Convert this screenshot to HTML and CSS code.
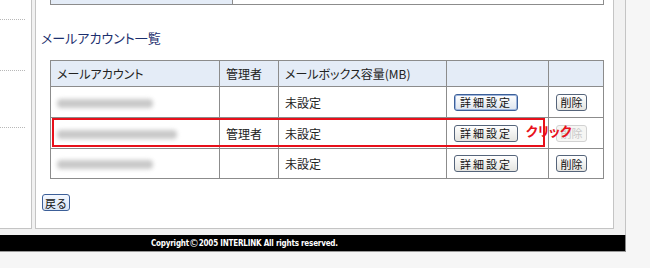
FILE: index.html
```html
<!DOCTYPE html>
<html lang="ja">
<head>
    <meta charset="UTF-8">
    <title>メールアカウント一覧</title>
    <link rel="stylesheet" href="styles.css">
</head>
<body>

<div class="page">
    <div class="columns">
        <div class="sidebar">
            <div class="dots d1"></div>
            <div class="dots d2"></div>
            <div class="dots d3"></div>
        </div>
        <div class="main">
            <div class="prev">
                <div class="prev-head"></div>
                <div class="prev-cell"></div>
            </div>

            <h2>メールアカウント一覧</h2>

            <div class="list">
                <table>
                    <tr class="head">
                        <th class="c1">メールアカウント</th>
                        <th class="c2">管理者</th>
                        <th class="c3">メールボックス容量(MB)</th>
                        <th class="c4"></th>
                        <th class="c5"></th>
                    </tr>
                    <tr>
                        <td><span class="blur short"></span></td>
                        <td></td>
                        <td>未設定</td>
                        <td><button class="btn focus">詳細設定</button></td>
                        <td><button class="btn small">削除</button></td>
                    </tr>
                    <tr>
                        <td><span class="blur long"></span></td>
                        <td>管理者</td>
                        <td>未設定</td>
                        <td><button class="btn">詳細設定</button></td>
                        <td><button class="btn small" disabled>削除</button></td>
                    </tr>
                    <tr class="last">
                        <td><span class="blur short"></span></td>
                        <td></td>
                        <td>未設定</td>
                        <td><button class="btn">詳細設定</button></td>
                        <td><button class="btn small">削除</button></td>
                    </tr>
                </table>
                <div class="mark"></div>
                <div class="mark-label">クリック</div>
            </div>

            <button class="back">戻る</button>
        </div>
    </div>
    <div class="footer">Copyright<span class="copy">©</span>2005 INTERLINK All rights reserved.</div>
</div>

</body>
</html>
```

FILE: styles.css
```css
body {
    margin: 0;
    background: #f6f6f6;
    font-family: "Noto Sans CJK JP", sans-serif;
    font-feature-settings: "palt";
    font-size: 12px;
    color: #222;
}
.page {
    width: 626px;
}
.columns {
    display: flex;
    gap: 3px;
    height: 235px;
    padding-right: 11px;
    background: #f1f1f1;
    border-right: 1px solid #c4c4c4;
    box-sizing: border-box;
}
.sidebar {
    position: relative;
    width: 32px;
    height: 229px;
    background: #fff;
    border-right: 1px solid #c4c4c4;
    border-bottom: 1px solid #c4c4c4;
    box-sizing: border-box;
}
.dots {
    position: absolute;
    left: 0;
    width: 25px;
    border-top: 1px dotted #b8b8b8;
}
.d1 { top: 19px; }
.d2 { top: 70px; }
.d3 { top: 127px; }
.main {
    flex: 1;
    height: 229px;
    background: #fff;
    border: 1px solid #c4c4c4;
    border-top: none;
    box-sizing: border-box;
}
.prev {
    display: flex;
    width: 554px;
    height: 5px;
    margin-left: 14px;
    border: 1px solid #8c8c8c;
    border-top: none;
    box-sizing: border-box;
}
.prev-head {
    width: 181px;
    background: #e4ecf7;
    border-right: 1px solid #8c8c8c;
}
.prev-cell {
    flex: 1;
}
h2 {
    margin: 25px 0 14px 5px;
    height: 16px;
    font-size: 13px;
    line-height: 16px;
    font-weight: normal;
    color: #1c2f6e;
}
.list {
    position: relative;
    margin-left: 14px;
    width: 554px;
}
table {
    width: 554px;
    border-collapse: collapse;
    border: 1px solid #8c8c8c;
}
th, td {
    border: 1px solid #8c8c8c;
    padding: 0 0 0 6px;
    text-align: left;
    font-weight: normal;
    height: 31px;
    box-sizing: border-box;
}
.head th {
    height: 26px;
    background: #e4ecf7;
}
.last td {
    height: 30px;
}
.c1 { width: 169px; }
.c2 { width: 59px; }
.c3 { width: 168px; }
.c4 { width: 102px; }
td:nth-child(4), td:nth-child(5) {
    padding-left: 7px;
}
.blur {
    display: inline-block;
    height: 9px;
    margin-top: 4px;
    background: #c9c9c9;
    border-radius: 4px;
    filter: blur(2px);
}
.short { width: 96px; }
.long { width: 120px; }
.btn {
    width: 64px;
    height: 17px;
    padding: 0;
    font-family: "Noto Sans CJK JP", sans-serif;
    font-size: 11px;
    line-height: 14px;
    letter-spacing: 2px;
    color: #111;
    background: linear-gradient(#ffffff, #e4e4e0);
    border: 1px solid #55647a;
    border-radius: 3px;
}
.btn.small {
    width: 31px;
    letter-spacing: 0;
}
.btn.focus {
    border-color: #3c5f98;
    box-shadow: 0 0 0 1px #9db5dd inset;
    background: linear-gradient(#ffffff, #dde4ee);
}
.btn:disabled {
    color: #c8c8c8;
    border-color: #d2d2d2;
    background: #f6f6f4;
}
.mark {
    position: absolute;
    left: 2px;
    top: 58px;
    width: 493px;
    height: 29px;
    border: 2px solid #e8101a;
    box-sizing: border-box;
}
.mark-label {
    position: absolute;
    left: 476px;
    top: 61px;
    font-size: 13px;
    font-weight: bold;
    color: #e8101a;
}
.back {
    margin: 15px 0 0 6px;
    width: 28px;
    height: 17px;
    padding: 0;
    font-family: "Noto Sans CJK JP", sans-serif;
    font-size: 11px;
    line-height: 14px;
    color: #111;
    background: linear-gradient(#f4f8ff, #d8e4f6);
    border: 1px solid #3c5f98;
    border-radius: 3px;
}
.footer {
    height: 17px;
    padding-left: 151px;
    background: #000;
    border-right: 1px solid #888;
    border-bottom: 1px solid #999;
    color: #fff;
    font-family: "DejaVu Sans Condensed", "DejaVu Sans", sans-serif;
    font-size: 8px;
    font-weight: bold;
    line-height: 17px;
    letter-spacing: -0.2px;
    box-sizing: border-box;
}
.copy {
    font-size: 11px;
    font-weight: normal;
    vertical-align: -1px;
}
```
